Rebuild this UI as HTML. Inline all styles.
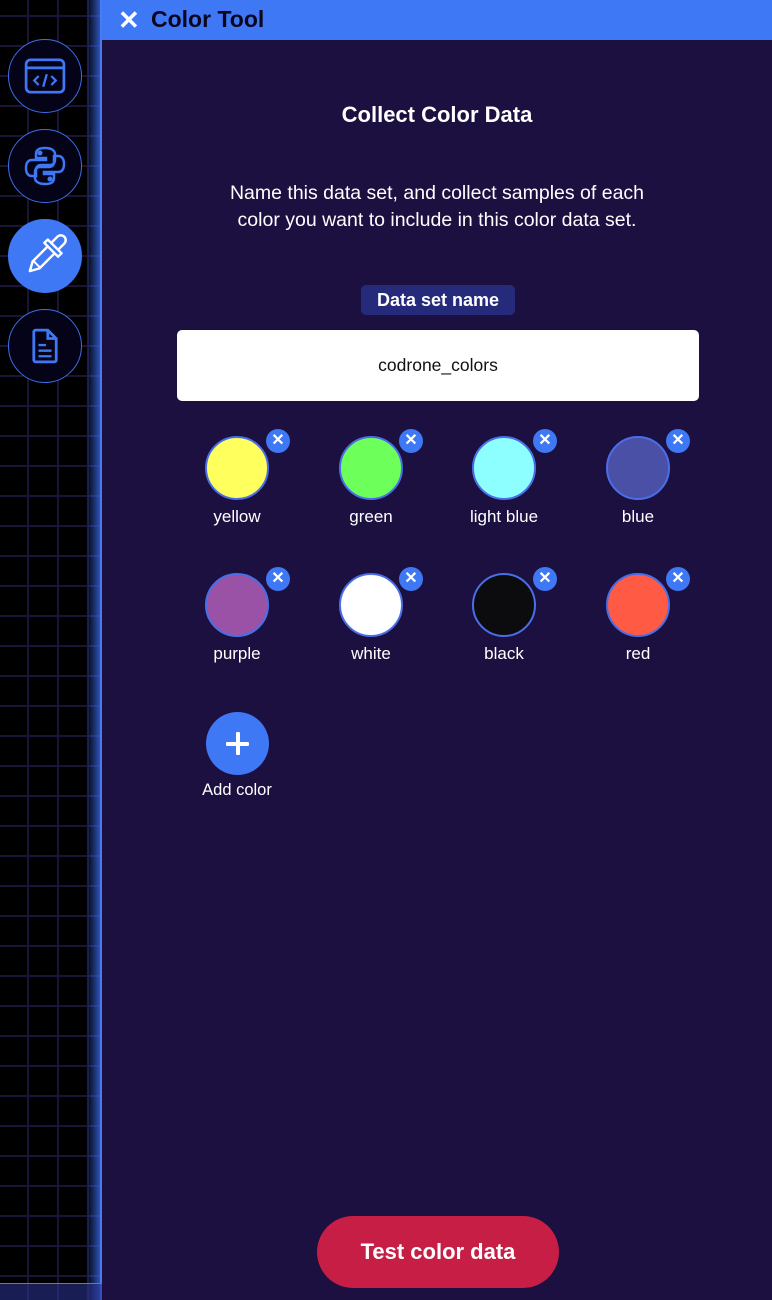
<!DOCTYPE html>
<html><head><meta charset="utf-8"><style>
*{margin:0;padding:0;box-sizing:border-box}
body{width:772px;height:1300px;overflow:hidden;background:#1c1040;font-family:"Liberation Sans",sans-serif;position:relative}
.side{position:absolute;left:0;top:0;width:102px;height:1300px;background-color:#000;
background-image:linear-gradient(to right,#1b1438 2px,transparent 2px),linear-gradient(to bottom,#1b1438 2px,transparent 2px);
background-size:30px 30px;background-position:27px 15px}
.glow{position:absolute;left:86px;top:0;width:16px;height:1300px;background:linear-gradient(to right,rgba(60,100,230,0),rgba(60,110,240,0.75));border-right:2px solid #4a7af0}
.bot{position:absolute;left:0;top:1283px;width:102px;height:17px;background:rgba(40,50,140,0.6);border-top:1px solid #4a7af0}
.btn{position:absolute;left:8px;width:74px;height:74px;border-radius:50%;border:1px solid #3c6ee8;background:#050318;display:flex;align-items:center;justify-content:center}
.btn.on{background:#3f78f5;border-color:#3f78f5}
.hdr{position:absolute;left:102px;top:0;width:670px;height:40px;background:#3f78f5}
.hdr .x{position:absolute;left:16px;top:5px;color:#fff;font-size:26px;font-weight:bold}
.hdr .t{position:absolute;left:49px;top:6px;font-size:23px;font-weight:bold;color:#0b0620}
.c{position:absolute;color:#fff;text-align:center}
.sw{position:absolute;width:64px;height:64px;border-radius:50%;border:2px solid #4a6ee8}
.xb{position:absolute;width:24px;height:24px;border-radius:50%;background:#3f78f5;color:#fff;font-size:16px;font-weight:bold;line-height:24px;text-align:center}
.lb{position:absolute;width:130px;text-align:center;color:#fff;font-size:17px}
</style></head><body>
<div class="side"></div><div class="glow"></div><div class="bot"></div>
<div class="btn" style="top:39px"><svg width="44" height="36" viewBox="0 0 46 40" fill="none" stroke="#3f78f5" stroke-width="3"><rect x="2" y="2" width="42" height="36" rx="5"/><line x1="2" y1="11" x2="44" y2="11"/><path d="M16 20l-5 5 5 5M30 20l5 5-5 5M25 18l-4 14" stroke-width="2.5"/></svg></div>
<div class="btn" style="top:129px"><svg width="44" height="44" viewBox="0 0 44 44" fill="none" stroke="#3f78f5" stroke-width="2.5"><path d="M22 4c-8 0-9 3-9 6v4h10v2H9c-4 0-6 3-6 8s2 8 6 8h4v-6c0-3 2-5 5-5h9c3 0 5-2 5-5v-6c0-3-3-6-10-6z"/><path d="M22 40c8 0 9-3 9-6v-4H21v-2h14c4 0 6-3 6-8s-2-8-6-8h-4v6c0 3-2 5-5 5h-9c-3 0-5 2-5 5v6c0 3 3 6 10 6z"/><circle cx="17" cy="9" r="1.3"/><circle cx="27" cy="35" r="1.3"/></svg></div>
<div class="btn on" style="top:219px"><svg width="74" height="74" viewBox="0 0 74 74" fill="none" stroke="#fff" stroke-width="2.5" stroke-linejoin="round"><g transform="translate(37 37) rotate(45)"><path d="M-5,-14 V-23 a5,5 0 0 1 10,0 V-14"/><rect x="-10" y="-14" width="20" height="5"/><path d="M-5,-9 V13 L0,22 L5,13 V-9"/><path d="M-5,12 H5" stroke-width="2"/></g></svg></div>
<div class="btn" style="top:309px"><svg width="28" height="36" viewBox="0 0 30 38" fill="none" stroke="#3f78f5" stroke-width="3"><path d="M3 4a2 2 0 012-2h13l9 9v23a2 2 0 01-2 2H5a2 2 0 01-2-2z"/><path d="M18 2v9h9"/><path d="M8 18h8M8 24h14M8 30h14" stroke-width="2.5"/></svg></div>
<div class="hdr"><span class="x">✕</span><span class="t">Color Tool</span></div>
<div class="c" style="left:102px;width:670px;top:102px;font-size:22px;font-weight:bold">Collect Color Data</div>
<div class="c" style="left:102px;width:670px;top:180px;font-size:19.5px;line-height:27px">Name this data set, and collect samples of each<br>color you want to include in this color data set.</div>
<div class="c" style="left:361px;top:285px;width:154px;height:30px;background:#262a7a;border-radius:5px;font-size:18px;font-weight:bold;line-height:30px">Data set name</div>
<div style="position:absolute;left:177px;top:330px;width:522px;height:71px;background:#fff;border-radius:5px;text-align:center;line-height:71px;font-size:17.5px;color:#111">codrone_colors</div>

<div class="sw" style="left:205px;top:436px;background:#ffff5e"></div><div class="xb" style="left:266px;top:429px">✕</div><div class="lb" style="left:172px;top:507px">yellow</div>
<div class="sw" style="left:339px;top:436px;background:#6dff5a"></div><div class="xb" style="left:399px;top:429px">✕</div><div class="lb" style="left:306px;top:507px">green</div>
<div class="sw" style="left:472px;top:436px;background:#8effff"></div><div class="xb" style="left:533px;top:429px">✕</div><div class="lb" style="left:439px;top:507px">light blue</div>
<div class="sw" style="left:606px;top:436px;background:#4a50a6"></div><div class="xb" style="left:666px;top:429px">✕</div><div class="lb" style="left:573px;top:507px">blue</div>

<div class="sw" style="left:205px;top:573px;background:#9a52a6"></div><div class="xb" style="left:266px;top:567px">✕</div><div class="lb" style="left:172px;top:644px">purple</div>
<div class="sw" style="left:339px;top:573px;background:#fff"></div><div class="xb" style="left:399px;top:567px">✕</div><div class="lb" style="left:306px;top:644px">white</div>
<div class="sw" style="left:472px;top:573px;background:#0c0c0e"></div><div class="xb" style="left:533px;top:567px">✕</div><div class="lb" style="left:439px;top:644px">black</div>
<div class="sw" style="left:606px;top:573px;background:#ff5a44"></div><div class="xb" style="left:666px;top:567px">✕</div><div class="lb" style="left:573px;top:644px">red</div>

<div style="position:absolute;left:206px;top:712px;width:63px;height:63px;border-radius:50%;background:#3f78f5"><div style="position:absolute;left:30px;top:20px;width:4px;height:23px;background:#fff;border-radius:1px"></div><div style="position:absolute;left:20px;top:30px;width:23px;height:4px;background:#fff;border-radius:1px"></div></div>
<div class="lb" style="left:172px;top:781px;font-size:16.5px">Add color</div>

<div style="position:absolute;left:317px;top:1216px;width:242px;height:72px;border-radius:36px;background:#c61e45;color:#fff;font-size:22px;font-weight:bold;text-align:center;line-height:72px">Test color data</div>
</body></html>
